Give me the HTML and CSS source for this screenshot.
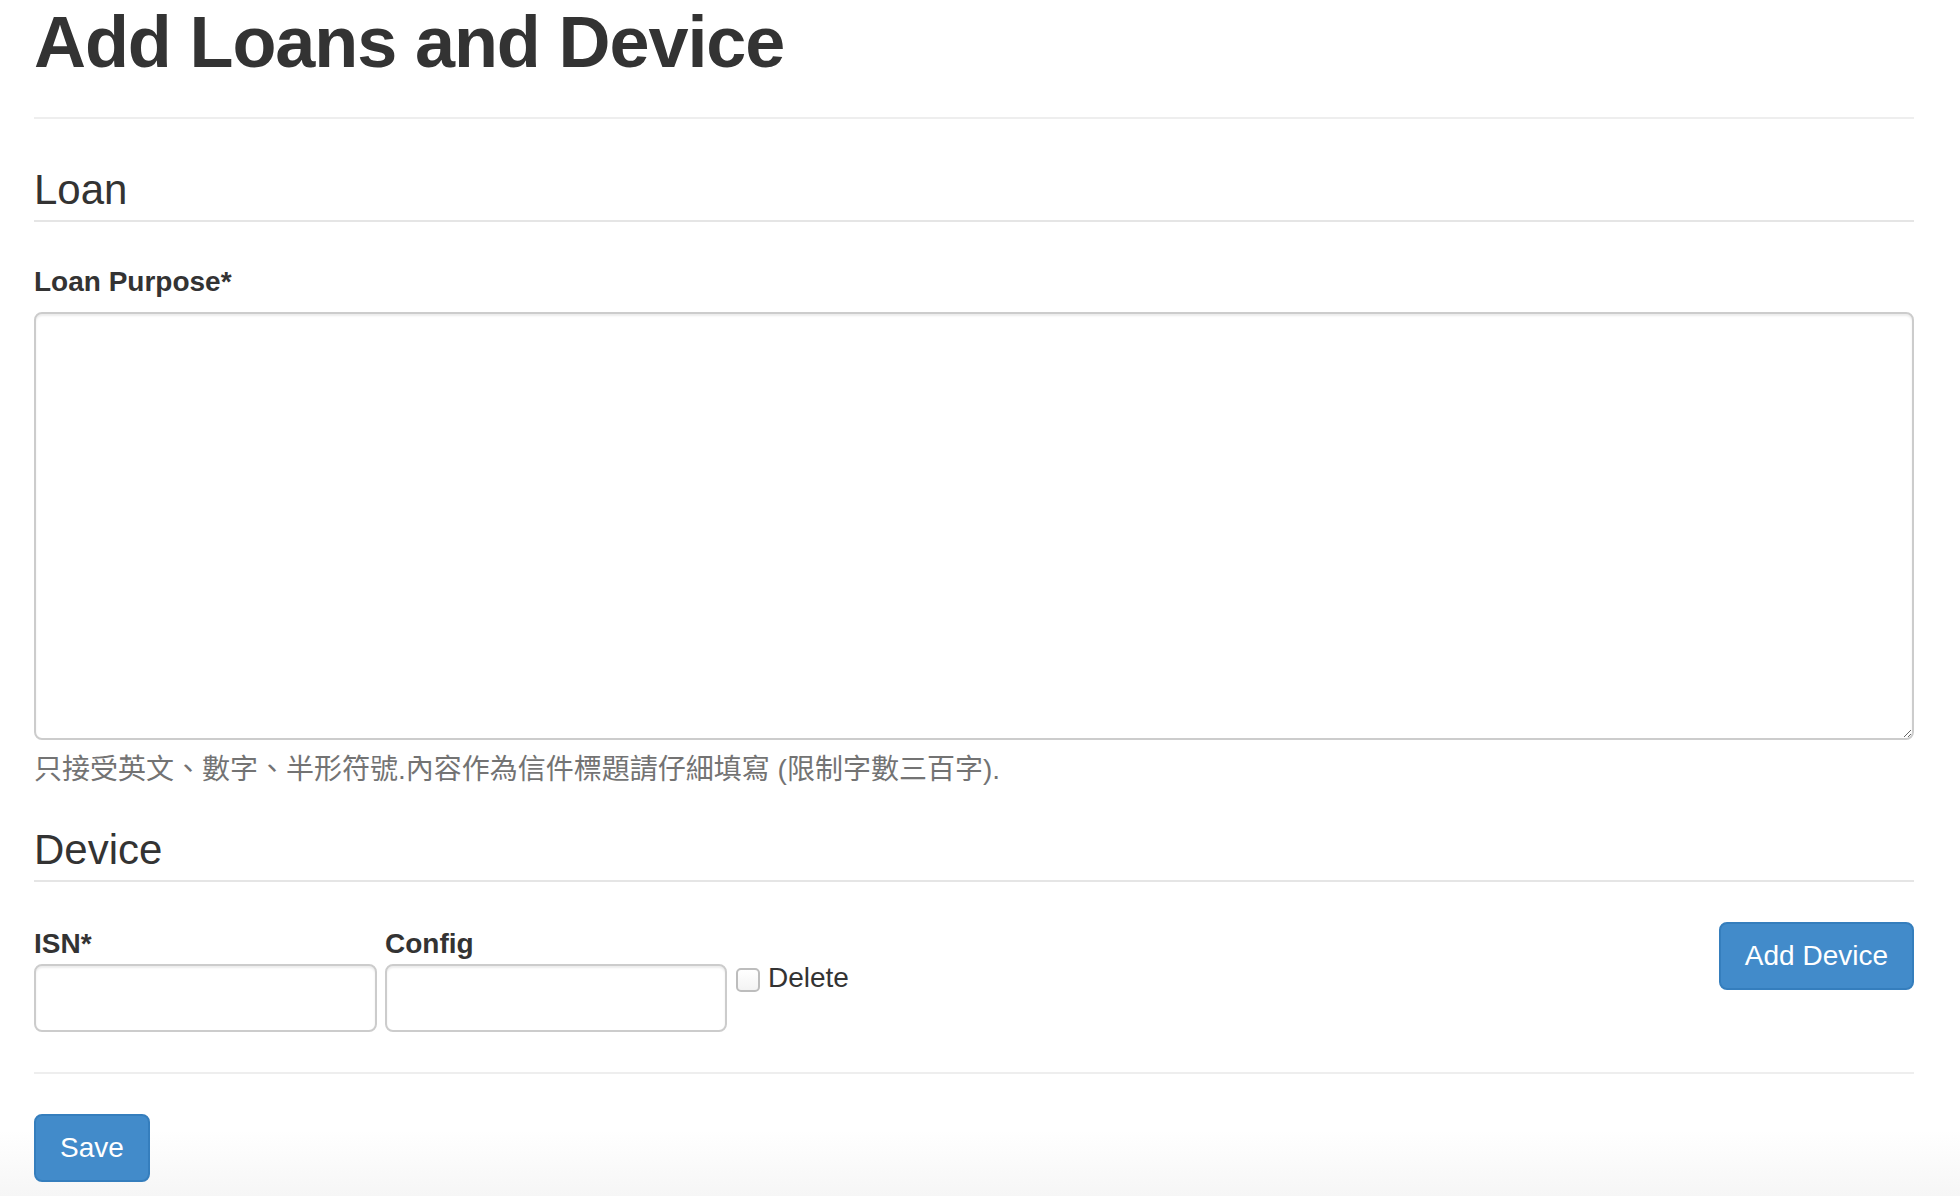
FILE: index.html
```html
<!DOCTYPE html>
<html lang="en">
<head>
<meta charset="utf-8">
<title>Add Loans and Device</title>
<link rel="stylesheet" href="styles.css">
</head>
<body>
<div class="container">
  <div class="page-header">
    <h1>Add Loans and Device</h1>
  </div>
  <form class="loan-form">
    <div class="section">
      <div class="legend">Loan</div>
      <div class="form-group">
        <label class="control-label" for="purpose">Loan Purpose*</label>
        <textarea id="purpose" class="form-control textarea"></textarea>
        <p class="help-block">只接受英文、數字、半形符號.內容作為信件標題請仔細填寫 (限制字數三百字).</p>
      </div>
    </div>
    <div class="section">
      <div class="legend">Device</div>
      <div class="device-row">
        <div class="field field-isn">
          <label class="control-label" for="isn">ISN*</label>
          <input id="isn" type="text" class="form-control">
        </div>
        <div class="field field-config">
          <label class="control-label" for="config">Config</label>
          <input id="config" type="text" class="form-control">
        </div>
        <label class="check">
          <input type="checkbox" class="check-box">
          <span class="check-text">Delete</span>
        </label>
        <button type="button" class="btn btn-primary add-device">Add Device</button>
      </div>
    </div>
    <hr class="divider">
    <button type="submit" class="btn btn-primary">Save</button>
  </form>
</div>
</body>
</html>
```

FILE: styles.css
```css
html {
  min-height: 100%;
  background: linear-gradient(to bottom, #ffffff 0, #ffffff calc(100% - 66px), #f6f6f6 100%);
}

body {
  margin: 0;
  font-family: "Liberation Sans", "Noto Sans CJK TC", Arial, sans-serif;
  font-size: 28px;
  line-height: 40px;
  color: #333333;
}

.container {
  padding: 3px 46px 0 34px;
}

.page-header {
  padding-bottom: 15px;
  border-bottom: 2px solid #eeeeee;
  margin-bottom: 41px;
}

.page-header h1 {
  margin: 0 0 20px;
  font-size: 72px;
  line-height: 79px;
  font-weight: bold;
  letter-spacing: -1.1px;
  color: #333333;
}

.loan-form {
  margin: 0;
}

.legend {
  font-size: 42px;
  line-height: 60px;
  padding-top: 1px;
  margin-top: -1px;
  color: #333333;
  border-bottom: 2px solid #e5e5e5;
  margin-bottom: 40px;
}

.form-group {
  margin-bottom: 30px;
}

.control-label {
  display: block;
  font-weight: bold;
  line-height: 40px;
  margin-bottom: 10px;
}

.form-control {
  display: block;
  box-sizing: border-box;
  width: 100%;
  margin: 0;
  padding: 12px 24px;
  font-family: inherit;
  font-size: 28px;
  line-height: 40px;
  color: #555555;
  background-color: #ffffff;
  border: 2px solid #cccccc;
  border-radius: 8px;
  box-shadow: inset 0 2px 2px rgba(0, 0, 0, 0.075);
}

.textarea {
  height: 428px;
  resize: both;
}

.help-block {
  margin: 10px 0 0;
  color: #737373;
  line-height: 40px;
}

.device-row {
  display: flex;
  align-items: flex-start;
}

.field .control-label {
  margin: 2px 0 0;
}

.field .form-control {
  height: 68px;
}

.field-isn {
  width: 343px;
}

.field-config {
  width: 342px;
  margin-left: 8px;
}

.check {
  display: flex;
  align-items: flex-start;
  margin: 36px 0 0 9px;
  line-height: 40px;
  font-weight: normal;
}

.check-box {
  appearance: none;
  -webkit-appearance: none;
  box-sizing: border-box;
  width: 24px;
  height: 24px;
  margin: 10px 8px 0 0;
  border: 2px solid #bdbdbd;
  border-radius: 5px;
  background: linear-gradient(to bottom, #ffffff, #f3f3f3);
}

.check-text {
  color: #333333;
}

.btn {
  display: inline-block;
  box-sizing: border-box;
  height: 68px;
  padding: 12px 24px;
  font-family: inherit;
  font-size: 28px;
  line-height: 40px;
  border-radius: 8px;
  border: 2px solid transparent;
  cursor: pointer;
}

.btn-primary {
  color: #ffffff;
  background-color: #428bca;
  border-color: #357ebd;
}

.add-device {
  margin-left: auto;
}

.divider {
  margin: 40px 0;
  border: 0;
  border-top: 2px solid #eeeeee;
  height: 0;
}
```
